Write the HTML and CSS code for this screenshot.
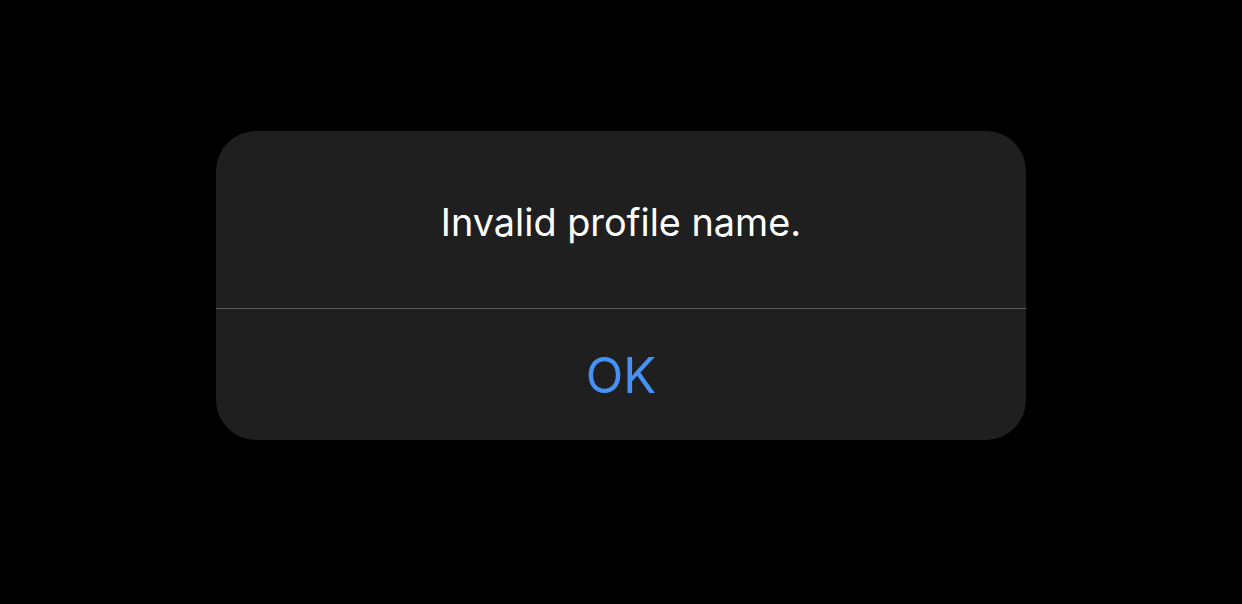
FILE: index.html
```html
<!DOCTYPE html>
<html>
<head>
<meta charset="utf-8">
<link rel="stylesheet" href="styles.css">
</head>
<body>
<div class="screen">
  <div class="alert">
    <div class="message">Invalid profile name.</div>
    <div class="divider"></div>
    <div class="action">OK</div>
  </div>
</div>
</body>
</html>
```
FILE: styles.css
```css
html, body {
  margin: 0;
  padding: 0;
  background: #000;
}
.screen {
  width: 1242px;
  height: 604px;
  display: flex;
  justify-content: center;
  padding-top: 131px;
  box-sizing: border-box;
}
.alert {
  width: 810px;
  height: 309px;
  background: #1f1f1f;
  border-radius: 40px;
  display: flex;
  flex-direction: column;
  font-family: Inter, "Noto Sans", sans-serif;
}
.message {
  height: 177px;
  display: flex;
  align-items: center;
  justify-content: center;
  color: #fff;
  font-size: 37.8px;
  padding-top: 5px;
  box-sizing: border-box;
}
.divider {
  height: 1px;
  background: #5a5a5a;
}
.action {
  flex: 1;
  display: flex;
  align-items: center;
  justify-content: center;
  color: #4591f5;
  font-size: 49px;
  padding-top: 1px;
  box-sizing: border-box;
}
```
